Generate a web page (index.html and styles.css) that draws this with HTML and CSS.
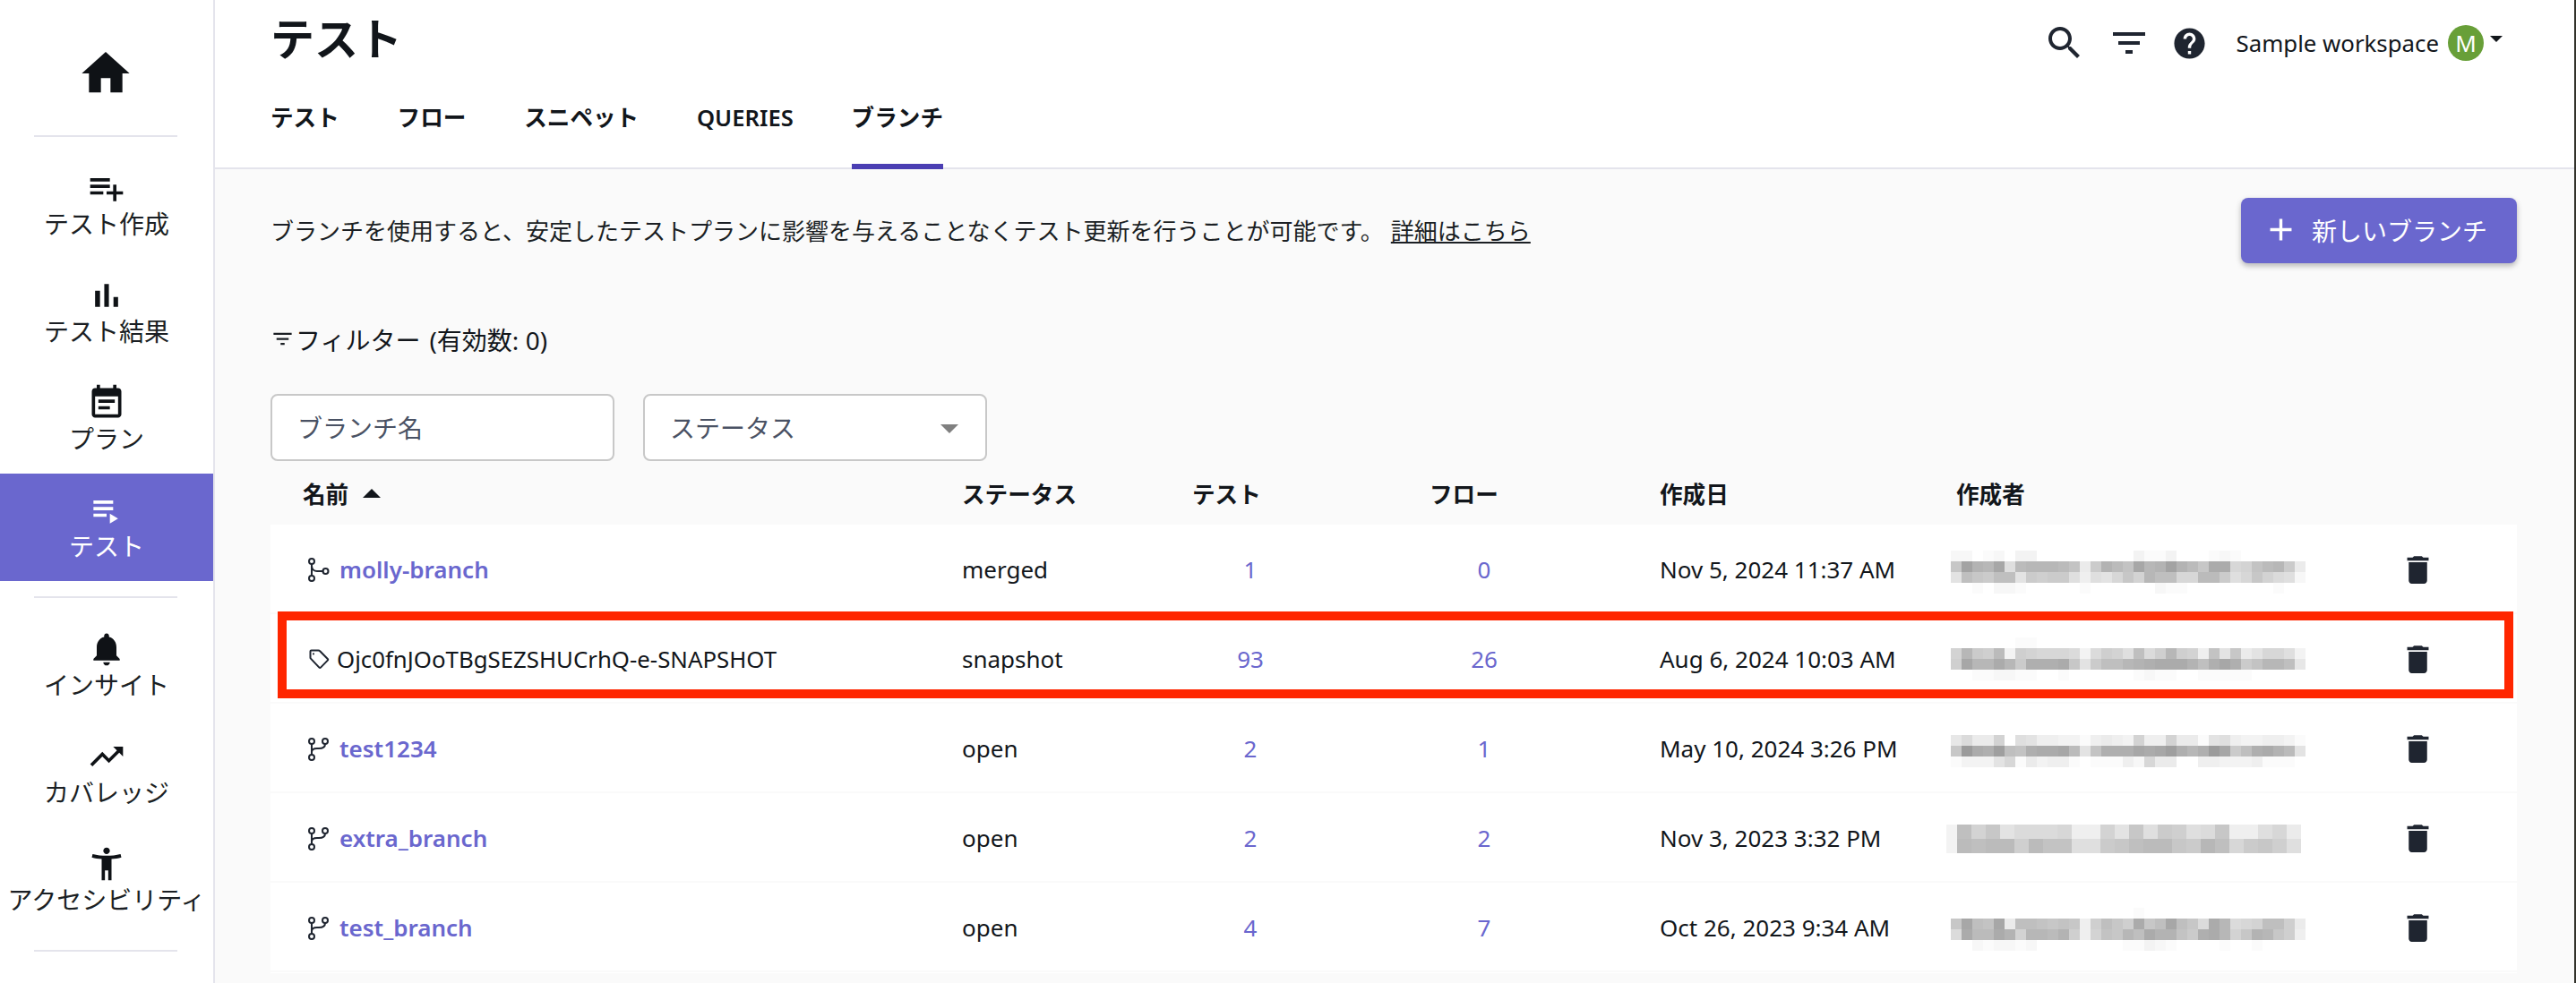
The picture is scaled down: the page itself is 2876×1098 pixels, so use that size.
FILE: index.html
```html
<!DOCTYPE html>
<html lang="ja">
<head>
<meta charset="utf-8">
<title>テスト - ブランチ</title>
<link rel="stylesheet" href="styles.css">
</head>
<body>
<div class="app">
  <aside class="sidebar">
    <a class="home"><svg class="home-icon" viewBox="0 0 24 24"><path d="M10 20v-6h4v6h5v-8h3L12 3 2 12h3v8z"/></svg></a>
    <hr class="divider">
    <nav class="nav-group">
      <a class="nav-item"><svg class="nav-icon" viewBox="0 0 24 24"><path d="M14 10H2v2h12v-2zm0-4H2v2h12V6zm4 8v-4h-2v4h-4v2h4v4h2v-4h4v-2h-4zM2 16h8v-2H2v2z"/></svg><span>テスト作成</span></a>
      <a class="nav-item"><svg class="nav-icon" viewBox="0 0 24 24"><path d="M5 9.2h3V19H5zM10.6 5h2.8v14h-2.8zm5.6 8H19v6h-2.8z"/></svg><span>テスト結果</span></a>
      <a class="nav-item"><svg class="nav-icon" viewBox="0 0 24 24"><path d="M17 10H7v2h10v-2zm2-7h-1V1h-2v2H8V1H6v2H5c-1.11 0-1.99.9-1.99 2L3 19c0 1.1.89 2 2 2h14c1.1 0 2-.9 2-2V5c0-1.1-.9-2-2-2zm0 16H5V8h14v11zm-5-5H7v2h7v-2z"/></svg><span>プラン</span></a>
      <a class="nav-item active"><svg class="nav-icon" viewBox="0 0 24 24"><path d="M4 10h12v2H4zm0-4h12v2H4zm0 8h8v2H4zm10 0v6l5-3z"/></svg><span>テスト</span></a>
    </nav>
    <hr class="divider">
    <nav class="nav-group">
      <a class="nav-item"><svg class="nav-icon" viewBox="0 0 24 24"><path d="M12 22c1.1 0 2-.9 2-2h-4c0 1.1.89 2 2 2zm6-6v-5c0-3.07-1.64-5.64-4.5-6.32V4c0-.83-.67-1.5-1.5-1.5s-1.5.67-1.5 1.5v.68C7.63 5.36 6 7.92 6 11v5l-2 2v1h16v-1l-2-2z"/></svg><span>インサイト</span></a>
      <a class="nav-item"><svg class="nav-icon" viewBox="0 0 24 24"><path d="M16 6l2.29 2.29-4.88 4.88-4-4L2 16.59 3.41 18l6-6 4 4 6.3-6.29L22 12V6z"/></svg><span>カバレッジ</span></a>
      <a class="nav-item"><svg class="nav-icon" viewBox="0 0 24 24"><path d="M20.5 6c-2.61.7-5.67 1-8.5 1s-5.89-.3-8.5-1L3 8c1.86.5 4 .83 6 1v13h2v-6h2v6h2V9c2-.17 4.14-.5 6-1l-.5-2zM12 6c1.1 0 2-.9 2-2s-.9-2-2-2-2 .9-2 2 .9 2 2 2z"/></svg><span>アクセシビリティ</span></a>
    </nav>
    <hr class="divider">
  </aside>

  <main class="main">
    <header class="header">
      <div class="header-top">
        <h1 class="title">テスト</h1>
        <div class="tools">
          <svg class="tool-icon search" viewBox="0 0 24 24"><path d="M15.5 14h-.79l-.28-.27C15.41 12.59 16 11.11 16 9.5 16 5.91 13.09 3 9.5 3S3 5.91 3 9.5 5.91 16 9.5 16c1.61 0 3.09-.59 4.23-1.57l.27.28v.79l5 4.99L20.49 19l-4.99-5zm-6 0C7.01 14 5 11.99 5 9.5S7.01 5 9.5 5 14 7.01 14 9.5 11.99 14 9.5 14z"/></svg>
          <svg class="tool-icon" viewBox="0 0 24 24"><path d="M10 18h4v-2h-4v2zM3 6v2h18V6H3zm3 7h12v-2H6v2z"/></svg>
          <svg class="tool-icon help" viewBox="0 0 24 24"><path d="M12 2C6.48 2 2 6.48 2 12s4.48 10 10 10 10-4.48 10-10S17.52 2 12 2zm1 17h-2v-2h2v2zm2.07-7.75l-.9.92C13.45 12.9 13 13.5 13 15h-2v-.5c0-1.1.45-2.1 1.17-2.83l1.24-1.26c.37-.36.59-.86.59-1.41 0-1.1-.9-2-2-2s-2 .9-2 2H8c0-2.21 1.79-4 4-4s4 1.79 4 4c0 .88-.36 1.68-.93 2.25z"/></svg>
          <div class="workspace">
            <span>Sample workspace</span>
            <span class="avatar">M</span>
            <span class="caret"></span>
          </div>
        </div>
      </div>
      <div class="tabs">
        <a class="tab">テスト</a>
        <a class="tab">フロー</a>
        <a class="tab">スニペット</a>
        <a class="tab">QUERIES</a>
        <a class="tab active">ブランチ</a>
      </div>
    </header>

    <section class="content">
      <div class="intro">
        <p class="intro-text">ブランチを使用すると、安定したテストプランに影響を与えることなくテスト更新を行うことが可能です。<a class="more">詳細はこちら</a></p>
        <button class="new-btn"><svg class="plus" viewBox="0 0 24 24"><path d="M19 13h-6v6h-2v-6H5v-2h6V5h2v6h6v2z"/></svg>新しいブランチ</button>
      </div>

      <div class="filter-title">
        <svg class="filter-icon" viewBox="0 0 24 24"><path d="M10 18h4v-2h-4v2zM3 6v2h18V6H3zm3 7h12v-2H6v2z"/></svg>
        <span>フィルター</span><span class="filter-count">(有効数: 0)</span>
      </div>

      <div class="filters">
        <div class="field">ブランチ名</div>
        <div class="field">ステータス<span class="select-arrow"></span></div>
      </div>

      <div class="grid table-head">
        <div class="name-head">名前<span class="sort-arrow"></span></div>
        <div>ステータス</div>
        <div>テスト</div>
        <div>フロー</div>
        <div>作成日</div>
        <div>作成者</div>
        <div></div>
      </div>

      <div class="table-body">
        <div class="grid row">
          <div class="name"><svg class="row-icon" viewBox="0 0 24 28"><circle cx="4" cy="5" r="3"/><circle cx="4" cy="24" r="3"/><circle cx="19.5" cy="16" r="3"/><path d="M4 8v13M4 10c0 4 3 6 6 6h6.500"/></svg><a class="link">molly-branch</a></div>
          <div class="status">merged</div>
          <div class="count count-test">1</div>
          <div class="count count-flow">0</div>
          <div>Nov 5, 2024 11:37 AM</div>
          <div class="author"><div class="mosaic"></div></div>
          <div class="actions"><svg class="trash" viewBox="0 0 24 24"><path d="M6 19c0 1.100.9 2 2 2h8c1.100 0 2-.9 2-2V7H6v12zM19 4h-3.500l-1-1h-5l-1 1H5v2h14V4z"/></svg></div>
        </div>
        <div class="grid row">
          <div class="name snapshot"><svg class="row-icon" viewBox="0 0 24 28"><path d="M2.500 5.500q0-1 1-1h8q1 0 1.700.8l8.600 8.700q.8.800 0 1.600l-7.800 8q-.8.800-1.600 0l-9.200-9.700q-.7-.7-.7-1.500zM6 8.300v.1"/></svg><span>Ojc0fnJOoTBgSEZSHUCrhQ-e-SNAPSHOT</span></div>
          <div class="status">snapshot</div>
          <div class="count count-test">93</div>
          <div class="count count-flow">26</div>
          <div>Aug 6, 2024 10:03 AM</div>
          <div class="author"><div class="mosaic"></div></div>
          <div class="actions"><svg class="trash" viewBox="0 0 24 24"><path d="M6 19c0 1.100.9 2 2 2h8c1.100 0 2-.9 2-2V7H6v12zM19 4h-3.500l-1-1h-5l-1 1H5v2h14V4z"/></svg></div>
        </div>
        <div class="grid row">
          <div class="name"><svg class="row-icon" viewBox="0 0 24 28"><circle cx="4" cy="6" r="3"/><circle cx="19" cy="6" r="3"/><circle cx="4" cy="24" r="3"/><path d="M4 9v12M19 9c0 4-3 5-7 5h-2c-3 0-6 1-6 4"/></svg><a class="link">test1234</a></div>
          <div class="status">open</div>
          <div class="count count-test">2</div>
          <div class="count count-flow">1</div>
          <div>May 10, 2024 3:26 PM</div>
          <div class="author"><div class="mosaic"></div></div>
          <div class="actions"><svg class="trash" viewBox="0 0 24 24"><path d="M6 19c0 1.100.9 2 2 2h8c1.100 0 2-.9 2-2V7H6v12zM19 4h-3.500l-1-1h-5l-1 1H5v2h14V4z"/></svg></div>
        </div>
        <div class="grid row">
          <div class="name"><svg class="row-icon" viewBox="0 0 24 28"><circle cx="4" cy="6" r="3"/><circle cx="19" cy="6" r="3"/><circle cx="4" cy="24" r="3"/><path d="M4 9v12M19 9c0 4-3 5-7 5h-2c-3 0-6 1-6 4"/></svg><a class="link">extra_branch</a></div>
          <div class="status">open</div>
          <div class="count count-test">2</div>
          <div class="count count-flow">2</div>
          <div>Nov 3, 2023 3:32 PM</div>
          <div class="author"><div class="mosaic"></div></div>
          <div class="actions"><svg class="trash" viewBox="0 0 24 24"><path d="M6 19c0 1.100.9 2 2 2h8c1.100 0 2-.9 2-2V7H6v12zM19 4h-3.500l-1-1h-5l-1 1H5v2h14V4z"/></svg></div>
        </div>
        <div class="grid row">
          <div class="name"><svg class="row-icon" viewBox="0 0 24 28"><circle cx="4" cy="6" r="3"/><circle cx="19" cy="6" r="3"/><circle cx="4" cy="24" r="3"/><path d="M4 9v12M19 9c0 4-3 5-7 5h-2c-3 0-6 1-6 4"/></svg><a class="link">test_branch</a></div>
          <div class="status">open</div>
          <div class="count count-test">4</div>
          <div class="count count-flow">7</div>
          <div>Oct 26, 2023 9:34 AM</div>
          <div class="author"><div class="mosaic"></div></div>
          <div class="actions"><svg class="trash" viewBox="0 0 24 24"><path d="M6 19c0 1.100.9 2 2 2h8c1.100 0 2-.9 2-2V7H6v12zM19 4h-3.500l-1-1h-5l-1 1H5v2h14V4z"/></svg></div>
        </div>
        <div class="highlight"></div>
      </div>
    </section>
  </main>
</div>
<script src="script.js"></script>
</body>
</html>
```

FILE: styles.css
```css
* { box-sizing: border-box; }
html, body { margin: 0; height: 100%; overflow: hidden; }
body {
  font-family: "Noto Sans", "Noto Sans CJK JP", sans-serif;
  font-size: 26px;
  color: #12161b;
  background: #fafafa;
}
a { color: inherit; text-decoration: none; }

.app { display: flex; height: 1098px; border-right: 2px solid #33332c; }

/* Sidebar */
.sidebar {
  flex: 0 0 240px;
  background: #fff;
  border-right: 2px solid #e4e4ec;
}
.home { display: block; height: 151px; padding-top: 50px; }
.home-icon { width: 64px; height: 64px; fill: #0f1216; display: block; margin-left: 86px; }
.divider { width: 160px; height: 2px; margin: 0 0 0 38px; border: 0; background: #e4e4ec; }
.nav-group { margin: 16px 0 17px; }
.nav-item {
  display: flex;
  flex-direction: column;
  align-items: center;
  height: 120px;
  padding-top: 19px;
  font-size: 28px;
  line-height: 40px;
  white-space: nowrap;
  color: #1b1f24;
}
.nav-item span { margin-top: -2px; }
.nav-icon { width: 44px; height: 44px; fill: #0f1216; flex: none; }
.nav-item.active { background: #6a67ce; color: #fff; }
.nav-item.active .nav-icon { fill: #fff; }

/* Main */
.main { flex: 1; min-width: 0; display: flex; flex-direction: column; }
.header {
  height: 189px;
  padding: 0 64px 0 62px;
  background: #fff;
  border-bottom: 2px solid #e4e4ec;
}
.header-top { display: flex; justify-content: space-between; height: 96px; }
.title { margin: 0; font-size: 49px; line-height: 86px; font-weight: 700; color: #11151a; }
.tools { display: flex; align-items: center; height: 96px; }
.tool-icon { width: 48px; height: 48px; fill: #1f2530; margin-right: 22px; flex: none; }
.tool-icon.search { margin-right: 23.500px; }
.tool-icon.help { width: 41px; height: 41px; margin-right: 31.500px; margin-left: 1.500px; }
.workspace { display: flex; align-items: center; margin-right: 16px; font-size: 25.800px; white-space: nowrap; }
.avatar {
  width: 40px;
  height: 40px;
  margin-left: 10px;
  border-radius: 50%;
  background: #689f38;
  color: #fff;
  font-size: 26px;
  line-height: 40px;
  text-align: center;
}
.caret {
  width: 0;
  height: 0;
  margin: -10px 0 0 7px;
  border-left: 7px solid transparent;
  border-right: 7px solid transparent;
  border-top: 7px solid #12161b;
}
.tabs { display: flex; gap: 64.800px; height: 93px; }
.tab {
  height: 93px;
  padding-top: 15px;
  line-height: 42px;
  font-size: 25.600px;
  font-weight: 600;
  border-bottom: 6px solid transparent;
}
.tab.active { border-bottom-color: #4b3fb3; }

/* Content */
.content { padding: 0 64px 0 62px; flex: 1; }
.intro { display: flex; justify-content: space-between; align-items: center; margin-top: 32px; height: 73px; }
.intro-text { margin: 0; font-size: 26px; line-height: 40px; color: #1b1f24; }
.more { margin-left: 8px; text-decoration: underline; }
.new-btn {
  display: flex;
  align-items: center;
  width: 308px;
  height: 73px;
  padding: 0 0 2px 24px;
  border: 0;
  border-radius: 8px;
  background: #6a67ce;
  color: #fff;
  font: inherit;
  font-size: 28px;
  box-shadow: 0 3px 6px rgba(0,0,0,.28);
}
.plus { width: 41px; height: 41px; fill: #fff; margin-right: 14px; flex: none; }
.filter-title { display: flex; align-items: center; margin-top: 65px; height: 40px; font-size: 28px; }
.filter-icon { width: 27px; height: 27px; fill: #1b1f24; margin: -2px 1px 0 0; flex: none; }
.filter-count { margin-left: 10px; }
.filters { display: flex; gap: 32px; margin-top: 41px; }
.field {
  position: relative;
  width: 384px;
  height: 75px;
  padding-left: 28px;
  border: 2px solid #c8c8c8;
  border-radius: 8px;
  background: #fff;
  font-size: 28px;
  line-height: 73px;
  color: #4a5264;
}
.select-arrow {
  position: absolute;
  right: 30px;
  top: 32px;
  border-left: 10px solid transparent;
  border-right: 10px solid transparent;
  border-top: 10px solid #808080;
}

/* Table */
.grid {
  display: grid;
  grid-template-columns: 772px 257px 265px 257px 331px 493px 133px;
  align-items: center;
}
.table-head { height: 71px; font-size: 25.600px; font-weight: 700; }
.name-head { display: flex; align-items: center; padding-left: 36px; }
.sort-arrow {
  margin-left: 16px;
  border-left: 10px solid transparent;
  border-right: 10px solid transparent;
  border-bottom: 10px solid #12161b;
}
.table-body { position: relative; background: #fff; height: 501px; }
.row { height: 100px; padding-top: 2px; border-bottom: 2px solid #fafafa; font-size: 26px; }
.name { display: flex; align-items: center; padding-left: 42px; }
.snapshot { font-size: 25.800px; }
.row-icon {
  width: 24px;
  height: 28px;
  flex: none;
  margin-right: 11px;
  fill: none;
  stroke: #1f2530;
  stroke-width: 2;
  stroke-linecap: round;
}
.snapshot .row-icon { margin-right: 8px; }
.link { color: #6a67ce; font-weight: 600; }
.count { color: #6a67ce; text-align: center; }
.count-test { width: 130px; }
.count-flow { width: 122px; }
.author { align-self: start; }
.mosaic { display: grid; width: max-content; }
.mosaic span { display: block; }
.actions { padding-left: 2px; }
.trash { display: block; width: 41px; height: 41px; fill: #1f2530; }
.highlight {
  position: absolute;
  left: 8px;
  right: 4px;
  top: 97px;
  height: 97px;
  border: 10px solid #ff2600;
  pointer-events: none;
}
```

FILE: script.js
```js
// Pixelated (redacted) author names: each letter is one grey level, a = white.
var shades = [
  { top: 27, left: -6, cell: 12, lines: [
    "ccabcaddaaaaaaaaadbbdaaabcbaaaaaa",
    "oxtswirsssrpfntrpwstxtrovvklprsnf",
    "hqonqqhnmnnieihkolsqqkkrrnikoljic",
    "aabaccbaaaaabaaaaaacbbaaaaaaaabaa" ] },
  { top: 24, left: -6, cell: 12, lines: [
    "aaaaaabbaaaaaaaaaaaaaaaaaaaaaaaaa",
    "lsnmrdmlkkkjdjmliqjmsmlephofhkkid",
    "mwssvsnuuuvohnqqstuvvvtquwunpssqg",
    "aabbccbbaabaaaaaabcbbaabbbbbaaaaa" ] },
  { top: 33, left: -6, cell: 12, lines: [
    "gjfflaiheeddbefedleelffbhieddeedb",
    "ozvuyqpuvvwrhpuuuwvwyusuzwnquvtrh",
    "bdddhkbfdeebabbbeckffaaeedddebbba" ] },
  { top: 33, left: -11, cell: 16, lead: 12, lines: [
    "dqlohjjjkeelhoinmijoeeikf",
    "drqrrmrppiinoqrronsqknomi" ] },
  { top: 26, left: -6, cell: 12, lines: [
    "aaaaaaaaaaaaaaaaabaaaaaaaaaaaaaaa",
    "owqpwfqqpopoemqomvoqwqojvsjklqqmf",
    "jvrrvtlssrtmelposqvttpnuvslotsome",
    "aacbccbcaaaaaaaabbdcbaaaabaabaaaa" ] }
];

document.querySelectorAll(".mosaic").forEach(function (box, i) {
  var data = shades[i];
  var count = data.lines[0].length - (data.lead ? 1 : 0);
  box.style.marginTop = data.top + "px";
  box.style.marginLeft = data.left + "px";
  box.style.gridTemplateColumns = (data.lead ? data.lead + "px " : "") + "repeat(" + count + "," + data.cell + "px)";
  box.style.gridAutoRows = data.cell + "px";
  data.lines.forEach(function (line) {
    line.split("").forEach(function (ch) {
      var grey = 255 - (ch.charCodeAt(0) - 97) * 4;
      var cell = document.createElement("span");
      cell.style.background = "rgb(" + grey + "," + grey + "," + grey + ")";
      box.appendChild(cell);
    });
  });
});
```
